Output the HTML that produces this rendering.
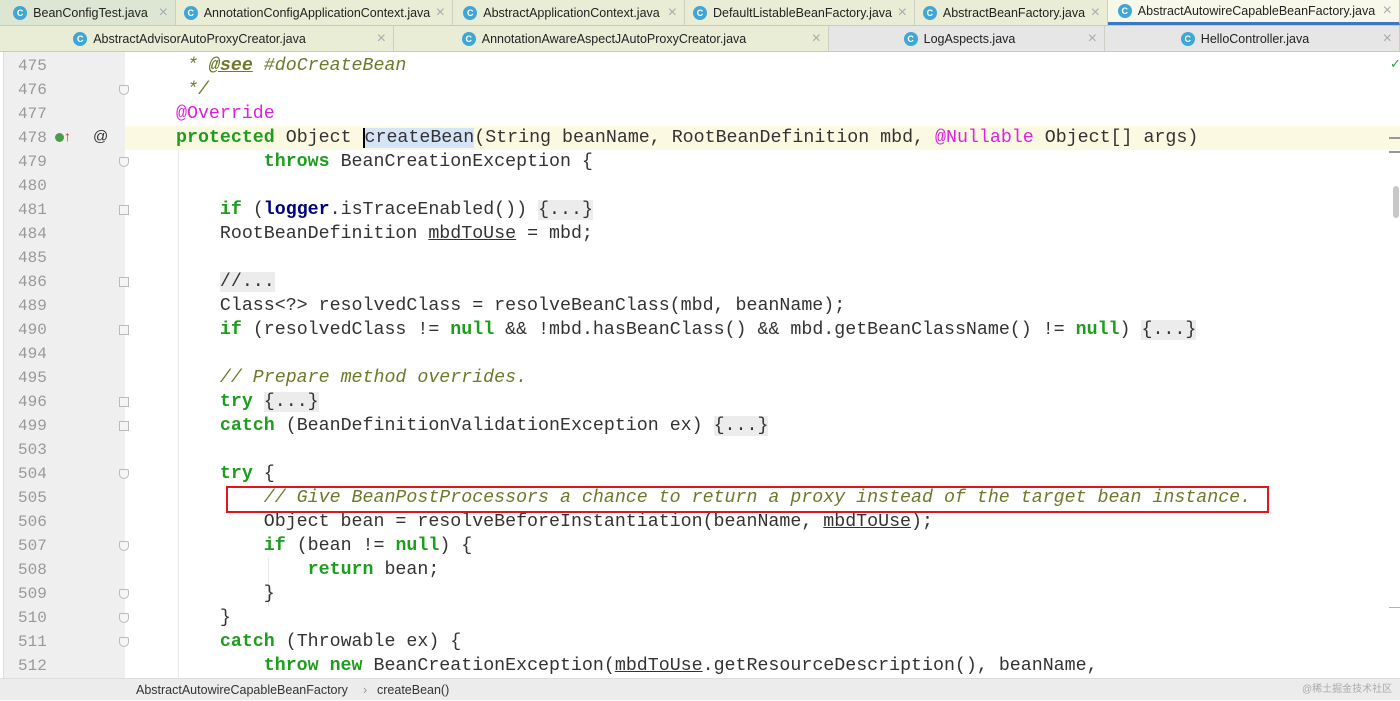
<!DOCTYPE html>
<html><head><meta charset="utf-8"><style>
*{margin:0;padding:0;box-sizing:border-box}
body{width:1400px;height:700px;overflow:hidden;background:#fff;font-family:"Liberation Sans",sans-serif;position:relative}
.tabrow{position:absolute;left:0;width:1400px;display:flex;border-bottom:1px solid #c8c8c8}
.tab{height:100%;border-right:1px solid #cfcfc0;display:flex;align-items:center;justify-content:center;font-size:12.5px;color:#222;position:relative;background:#eaedd6;padding-right:14px}
.tab .x{position:absolute;right:7px;color:#aaa;font-size:16px;font-weight:300}
.ic{display:inline-block;width:14px;height:14px;border-radius:50%;background:#3fa6d6;color:#fff;font-size:9px;line-height:14px;text-align:center;margin-right:6px;font-weight:bold}
.gut{position:absolute;left:3px;top:52px;width:122px;height:626px;background:#efefef;border-left:1px solid #ddd}
.row{position:absolute;left:0;width:1400px;height:24px;font-family:"Liberation Mono",monospace;font-size:18.3px;line-height:24px;white-space:pre;color:#333}
.ln{position:absolute;left:18px;color:#999;font-size:16px}
.c{position:absolute;left:176px}
.k{color:#1e9e1e;font-weight:bold}
.cm{color:#6d7a2a;font-style:italic}
.an{color:#e020e0}
.lg{color:#000080;font-weight:bold}
.f{background:#ececec}
.u{text-decoration:underline}
.fold{position:absolute;left:119px;width:10px;height:10px;border:1px solid #bbb;background:#f5f5f5}
</style></head><body>
<div class="tabrow" style="top:0;height:26px">
<div class="tab" style="width:176px;background:#dde6d2"><span class="ic">C</span>BeanConfigTest.java<span class="x">×</span></div>
<div class="tab" style="width:277px"><span class="ic">C</span>AnnotationConfigApplicationContext.java<span class="x">×</span></div>
<div class="tab" style="width:232px"><span class="ic">C</span>AbstractApplicationContext.java<span class="x">×</span></div>
<div class="tab" style="width:230px"><span class="ic">C</span>DefaultListableBeanFactory.java<span class="x">×</span></div>
<div class="tab" style="width:193px"><span class="ic">C</span>AbstractBeanFactory.java<span class="x">×</span></div>
<div class="tab" style="width:292px;background:#f8f8ea;border-bottom:3px solid #3b78c4"><span class="ic">C</span>AbstractAutowireCapableBeanFactory.java<span class="x">×</span></div>
</div>
<div class="tabrow" style="top:26px;height:26px">
<div class="tab" style="width:394px"><span class="ic">C</span>AbstractAdvisorAutoProxyCreator.java<span class="x">×</span></div>
<div class="tab" style="width:435px"><span class="ic">C</span>AnnotationAwareAspectJAutoProxyCreator.java<span class="x">×</span></div>
<div class="tab" style="width:276px;background:#e6e6e6"><span class="ic">C</span>LogAspects.java<span class="x">×</span></div>
<div class="tab" style="width:295px;background:#e6e6e6"><span class="ic">C</span>HelloController.java<span class="x">×</span></div>
</div>
<div class="gut"></div>
<div style="position:absolute;left:125px;top:126px;width:1275px;height:24px;background:#fcf9e3"></div>
<div style="position:absolute;left:178px;top:150px;width:1px;height:528px;background:#e8e8e8"></div>
<div style="position:absolute;left:268px;top:558px;width:1px;height:48px;background:#e8e8e8"></div>
<div id="code"></div>
<div style="position:absolute;left:226px;top:486px;width:1043px;height:27px;border:2.5px solid #e3141c"></div>
<div style="position:absolute;left:1390px;top:56px;color:#2a9d3a;font-size:13px">✓</div>
<div style="position:absolute;left:1389px;top:137px;width:11px;height:2px;background:#999"></div>
<div style="position:absolute;left:1389px;top:151px;width:11px;height:2px;background:#999"></div>
<div style="position:absolute;left:1393px;top:186px;width:6px;height:32px;border-radius:3px;background:#c8c8c8"></div>
<div style="position:absolute;left:1389px;top:607px;width:11px;height:1px;background:#e99"></div>
<div style="position:absolute;left:0;top:678px;width:1400px;height:22px;background:#ececec;border-top:1px solid #ddd;font-size:12.5px;color:#333;line-height:22px">
<span style="position:absolute;left:136px">AbstractAutowireCapableBeanFactory</span><span style="position:absolute;left:363px;color:#999">›</span><span style="position:absolute;left:377px">createBean()</span>
<span style="position:absolute;left:1302px;color:#aaa;font-size:10px;font-family:'Liberation Sans','Noto Sans CJK SC',sans-serif">@稀土掘金技术社区</span></div>
<script>
const L=[
["475","<span class='cm'> * </span><b class='cm' style='font-weight:bold'><u>@see</u></b><span class='cm'> #doCreateBean</span>"],
["476","<span class='cm'> */</span>",1],
["477","<span class='an'>@Override</span>"],
["478","<span class='k'>protected</span> Object <span style='background:#d6e4f7;border-left:2px solid #000'>createBean</span>(String beanName, RootBeanDefinition mbd, <span class='an'>@Nullable</span> Object[] args)"],
["479","        <span class='k'>throws</span> BeanCreationException {",1],
["480",""],
["481","    <span class='k'>if</span> (<span class='lg'>logger</span>.isTraceEnabled()) <span class='f'>{...}</span>",2],
["484","    RootBeanDefinition <span class='u'>mbdToUse</span> = mbd;"],
["485",""],
["486","    <span class='f'>//...</span>",2],
["489","    Class&lt;?&gt; resolvedClass = resolveBeanClass(mbd, beanName);"],
["490","    <span class='k'>if</span> (resolvedClass != <span class='k'>null</span> &amp;&amp; !mbd.hasBeanClass() &amp;&amp; mbd.getBeanClassName() != <span class='k'>null</span>) <span class='f'>{...}</span>",2],
["494",""],
["495","    <span class='cm'>// Prepare method overrides.</span>"],
["496","    <span class='k'>try</span> <span class='f'>{...}</span>",2],
["499","    <span class='k'>catch</span> (BeanDefinitionValidationException ex) <span class='f'>{...}</span>",2],
["503",""],
["504","    <span class='k'>try</span> {",1],
["505","        <span class='cm'>// Give BeanPostProcessors a chance to return a proxy instead of the target bean instance.</span>"],
["506","        Object bean = resolveBeforeInstantiation(beanName, <span class='u'>mbdToUse</span>);"],
["507","        <span class='k'>if</span> (bean != <span class='k'>null</span>) {",1],
["508","            <span class='k'>return</span> bean;"],
["509","        }",1],
["510","    }",1],
["511","    <span class='k'>catch</span> (Throwable ex) {",1],
["512","        <span class='k'>throw new</span> BeanCreationException(<span class='u'>mbdToUse</span>.getResourceDescription(), beanName,"]
];
let h="";
L.forEach((r,i)=>{const t=54+24*i;
h+=`<div class="row" style="top:${t}px"><span class="ln">${r[0]}</span><span class="c">${r[1]}</span></div>`;
if(r[2])h+=`<div class="fold" style="top:${t+7}px;${r[2]==1?'border-radius:2px 2px 5px 5px':''}"></div>`;
});
h+=`<div style="position:absolute;left:55px;top:133px;width:9px;height:9px;border-radius:50%;background:#4a9e4a"></div><div style="position:absolute;left:64px;top:128px;color:#d22;font-size:14px;font-weight:bold">↑</div><div style="position:absolute;left:93px;top:128px;font-size:15px;color:#333">@</div>`;
document.getElementById("code").innerHTML=h;
</script>
</body></html>
